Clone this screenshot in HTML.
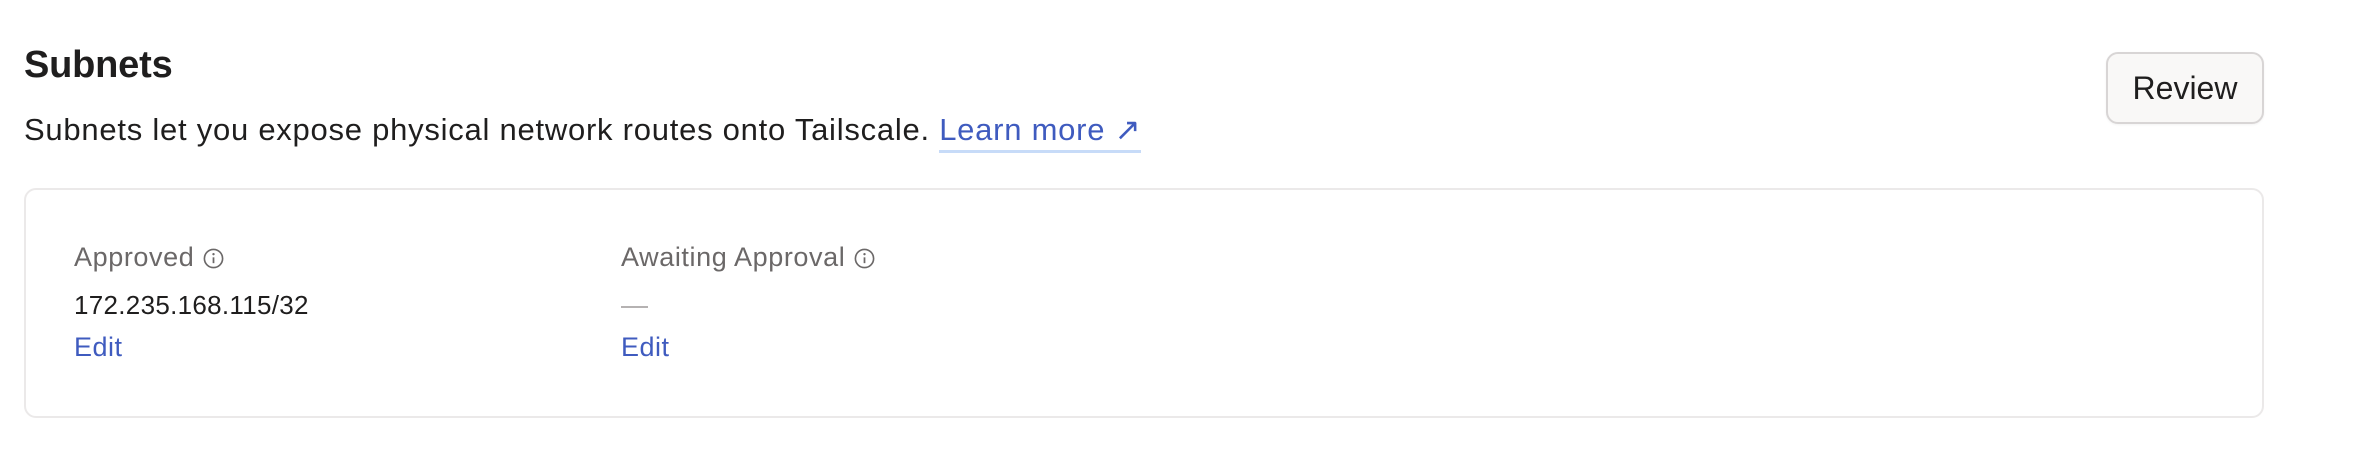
<!DOCTYPE html>
<html><head><meta charset="utf-8"><style>
html,body{margin:0;padding:0;background:#fff;width:2374px;height:450px;overflow:hidden;font-family:"Liberation Sans",sans-serif;}
.a{position:absolute;white-space:nowrap;}
h1{position:absolute;left:24px;top:43px;margin:0;font-size:38px;font-weight:bold;color:#1f1e1e;line-height:44px;letter-spacing:-0.2px}
.desc{left:24px;top:112px;font-size:31px;line-height:36px;color:#1f1e1e;letter-spacing:0.75px}
.desc a{color:#3f5bbf;text-decoration:none;border-bottom:3px solid #c7dbf8;padding-bottom:3px}
.btn{position:absolute;left:2106px;top:52px;width:154px;height:68px;border:2px solid #d8d5d5;border-radius:12px;background:#f9f8f7;box-sizing:content-box;font-size:32px;line-height:68px;text-align:center;color:#1f1e1e;box-shadow:0 1px 2px rgba(0,0,0,.05)}
.card{position:absolute;left:24px;top:188px;width:2236px;height:226px;border:2px solid #ebe9e9;border-radius:12px;}
.lbl{font-size:27px;color:#6b6868;line-height:30px;letter-spacing:0.6px}
.val{font-size:26px;color:#1f1e1e;line-height:30px;letter-spacing:0.3px}
.edit{font-size:27px;color:#3f5bbf;line-height:30px;letter-spacing:0.5px}
.i{display:inline-block;width:21px;height:21px;vertical-align:-3px;margin-left:9px}
</style></head><body>
<h1>Subnets</h1>
<div class="a desc">Subnets let you expose physical network routes onto Tailscale. <a>Learn more ↗</a></div>
<div class="btn">Review</div>
<div class="card"></div>
<div class="a lbl" style="left:74px;top:242px">Approved<svg class="i" viewBox="0 0 18 18"><circle cx="9" cy="9" r="7.8" fill="none" stroke="#6b6868" stroke-width="1.4"/><line x1="9" y1="8" x2="9" y2="13" stroke="#6b6868" stroke-width="1.5"/><circle cx="9" cy="5.3" r="1" fill="#6b6868"/></svg></div>
<div class="a val" style="left:74px;top:290px">172.235.168.115/32</div>
<div class="a edit" style="left:74px;top:332px">Edit</div>
<div class="a lbl" style="left:621px;top:242px">Awaiting Approval<svg class="i" viewBox="0 0 18 18"><circle cx="9" cy="9" r="7.8" fill="none" stroke="#6b6868" stroke-width="1.4"/><line x1="9" y1="8" x2="9" y2="13" stroke="#6b6868" stroke-width="1.5"/><circle cx="9" cy="5.3" r="1" fill="#6b6868"/></svg></div>
<div class="a" style="left:621px;top:306px;width:27px;height:2px;background:#b5b2b2"></div>
<div class="a edit" style="left:621px;top:332px">Edit</div>
</body></html>
